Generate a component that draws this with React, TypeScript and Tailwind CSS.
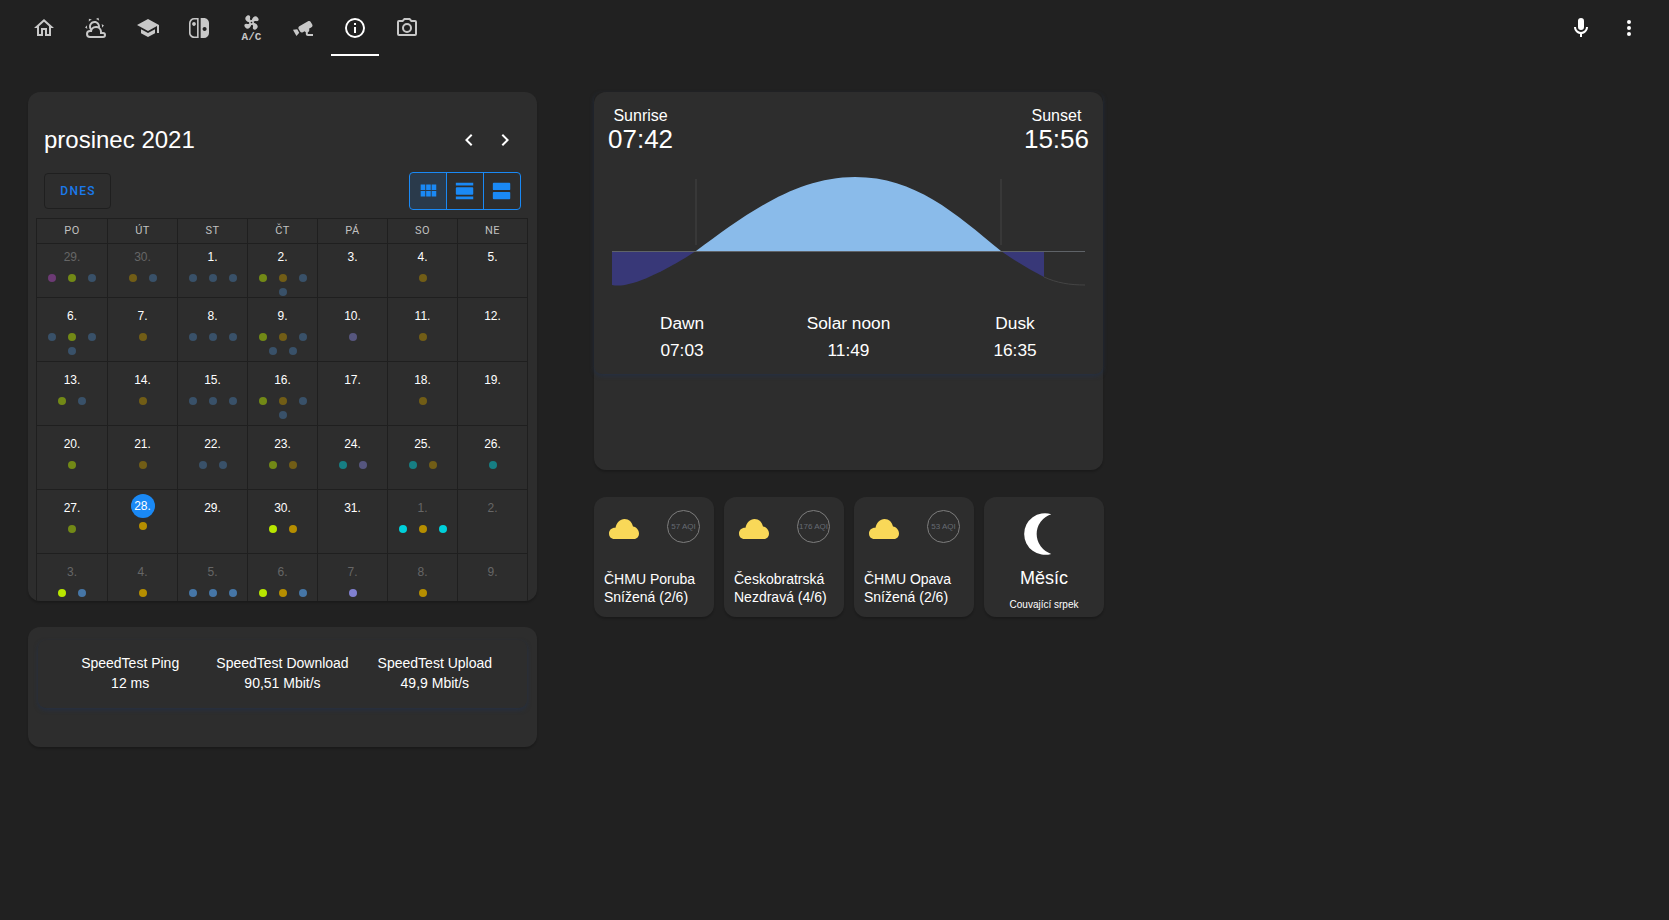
import { ReactNode } from "react";

const mdi = {
  home: "M12 5.69L17 10.19V18H15V12H9V18H7V10.19L12 5.69M12 3L2 12H5V20H11V14H13V20H19V12H22L12 3Z",
  weather:
    "M12.74,5.47C15.1,6.5 16.35,9.03 15.92,11.46C17.19,12.56 18,14.19 18,16V16.17C18.31,16.06 18.65,16 19,16A3,3 0 0,1 22,19A3,3 0 0,1 19,22H6A4,4 0 0,1 2,18A4,4 0 0,1 6,14H6.27C5,12.45 4.6,10.24 5.5,8.26C6.72,5.5 9.97,4.24 12.74,5.47M11.93,7.3C10.16,6.5 8.09,7.31 7.31,9.07C6.85,10.09 6.93,11.22 7.41,12.13C8.5,10.83 10.16,10 12,10C12.7,10 13.38,10.12 14,10.34C13.94,9.06 13.18,7.86 11.93,7.3M13.55,3.64C13,3.4 12.45,3.23 11.88,3.12L14.37,1.82L15.27,4.71C14.76,4.29 14.19,3.93 13.55,3.64M6.09,4.44C5.6,4.79 5.17,5.19 4.8,5.63L4.91,2.82L7.87,3.5C7.25,3.71 6.65,4.03 6.09,4.44M18,9.71C17.91,9.12 17.78,8.55 17.59,8L19.97,9.5L17.92,11.73C18.03,11.08 18.05,10.4 18,9.71M3.04,11.3C3.11,11.9 3.24,12.47 3.43,13L1.06,11.5L3.1,9.28C3,9.93 2.97,10.61 3.04,11.3M19,18H16V16A4,4 0 0,0 12,12A4,4 0 0,0 8,16H6A2,2 0 0,0 4,18A2,2 0 0,0 6,20H19A1,1 0 0,0 20,19A1,1 0 0,0 19,18Z",
  school: "M12,3L1,9L12,15L21,10.09V17H23V9M5,13.18V17.18L12,21L19,17.18V13.18L12,17L5,13.18Z",
  swit: "M10.04,20.4H7.12C6.19,20.4 5.3,20 4.64,19.36C4,18.7 3.6,17.81 3.6,16.88V7.12C3.6,6.19 4,5.3 4.64,4.64C5.3,4 6.19,3.62 7.12,3.62H10.04V20.4M7.12,2A5.12,5.12 0 0,0 2,7.12V16.88C2,19.71 4.29,22 7.12,22H11.65V2H7.12M5.11,8C5.11,9.04 5.95,9.88 7,9.88C8.03,9.88 8.87,9.04 8.87,8C8.87,6.96 8.03,6.12 7,6.12C5.95,6.12 5.11,6.96 5.11,8M17.61,11C18.72,11 19.62,11.89 19.62,13C19.62,14.12 18.72,15 17.61,15C16.5,15 15.58,14.12 15.58,13C15.58,11.89 16.5,11 17.61,11M16.88,22A5.12,5.12 0 0,0 22,16.88V7.12C22,4.29 19.71,2 16.88,2H13.65V22H16.88Z",
  fan: "M12,11A1,1 0 0,0 11,12A1,1 0 0,0 12,13A1,1 0 0,0 13,12A1,1 0 0,0 12,11M12.5,2C17,2 17.11,5.57 14.75,6.75C13.76,7.24 13.32,8.29 13.13,9.22C13.61,9.42 14.03,9.73 14.35,10.13C18.05,8.13 22.03,8.92 22.03,12.5C22.03,17 18.46,17.1 17.28,14.73C16.78,13.74 15.72,13.3 14.79,13.11C14.59,13.59 14.28,14 13.88,14.34C15.87,18.03 15.08,22 11.5,22C7,22 6.91,18.42 9.27,17.24C10.25,16.75 10.69,15.71 10.89,14.79C10.4,14.59 9.97,14.27 9.65,13.87C5.96,15.85 2,15.07 2,11.5C2,7 5.56,6.89 6.74,9.26C7.24,10.25 8.29,10.68 9.22,10.87C9.41,10.39 9.73,9.97 10.14,9.65C8.15,5.96 8.94,2 12.5,2Z",
  cctv: "M18.15,4.94C17.77,4.91 17.37,5 17,5.2L8.35,10.2C7.39,10.76 7.07,12 7.62,12.94L9.12,15.53C9.67,16.5 10.89,16.82 11.85,16.27L13.65,15.23C13.92,15.69 14.32,16.06 14.81,16.27V18.04C14.81,19.13 15.7,20 16.81,20H22V18.04H16.81V16.27C17.72,15.87 18.31,14.97 18.31,14C18.31,13.54 18.19,13.11 17.97,12.73L20.5,11.27C21.47,10.71 21.8,9.5 21.24,8.53L19.74,5.94C19.4,5.34 18.79,5 18.15,4.94M6.22,13.17L2,13.87L2.75,15.17L4.75,18.63L5.5,19.93L8.22,16.63L6.22,13.17Z",
  info: "M11,9H13V7H11M12,20C7.59,20 4,16.41 4,12C4,7.59 7.59,4 12,4C16.41,4 20,7.59 20,12C20,16.41 16.41,20 12,20M12,2A10,10 0 0,0 2,12A10,10 0 0,0 12,22A10,10 0 0,0 22,12A10,10 0 0,0 12,2M11,17H13V11H11V17Z",
  camera:
    "M20,4H16.83L15,2H9L7.17,4H4A2,2 0 0,0 2,6V18A2,2 0 0,0 4,20H20A2,2 0 0,0 22,18V6A2,2 0 0,0 20,4M20,18H4V6H8.05L9.88,4H14.12L15.95,6H20V18M12,7A5,5 0 0,0 7,12A5,5 0 0,0 12,17A5,5 0 0,0 17,12A5,5 0 0,0 12,7M12,15A3,3 0 0,1 9,12A3,3 0 0,1 12,9A3,3 0 0,1 15,12A3,3 0 0,1 12,15Z",
  mic: "M12,2A3,3 0 0,1 15,5V11A3,3 0 0,1 12,14A3,3 0 0,1 9,11V5A3,3 0 0,1 12,2M19,11C19,14.53 16.39,17.44 13,17.93V21H11V17.93C7.61,17.44 5,14.53 5,11H7A5,5 0 0,0 12,16A5,5 0 0,0 17,11H19Z",
  dots: "M12,16A2,2 0 0,1 14,18A2,2 0 0,1 12,20A2,2 0 0,1 10,18A2,2 0 0,1 12,16M12,10A2,2 0 0,1 14,12A2,2 0 0,1 12,14A2,2 0 0,1 10,12A2,2 0 0,1 12,10M12,4A2,2 0 0,1 14,6A2,2 0 0,1 12,8A2,2 0 0,1 10,6A2,2 0 0,1 12,4Z",
  moon: "M2 12A10 10 0 0 0 15 21.54A10 10 0 0 1 15 2.46A10 10 0 0 0 2 12Z",
  left: "M15.41,16.58L10.83,12L15.41,7.41L14,6L8,12L14,18L15.41,16.58Z",
  right: "M8.59,16.58L13.17,12L8.59,7.41L10,6L16,12L10,18L8.59,16.58Z",
  module: "M16,5V11H21V5M10,11H15V5H10M16,18H21V12H16M10,18H15V12H10M4,18H9V12H4M4,11H9V5H4V11Z",
  day: "M2,3V6H21V3M20,8H3A1,1 0 0,0 2,9V15A1,1 0 0,0 3,16H20A1,1 0 0,0 21,15V9A1,1 0 0,0 20,8M2,21H21V18H2V21Z",
  agenda:
    "M20,3H3A1,1 0 0,0 2,4V10A1,1 0 0,0 3,11H20A1,1 0 0,0 21,10V4A1,1 0 0,0 20,3M20,13H3A1,1 0 0,0 2,14V20A1,1 0 0,0 3,21H20A1,1 0 0,0 21,20V14A1,1 0 0,0 20,13Z",
};

const Icon = ({ d, className }: { d: string; className?: string }) => (
  <svg viewBox="0 0 24 24" className={className} fill="currentColor">
    <path d={d} />
  </svg>
);

const AcIcon = () => (
  <svg viewBox="0 0 24 24" className="w-6 h-6 overflow-visible text-[#c8c8c8]" fill="currentColor">
    <g transform="translate(2.9 -3.1) scale(0.8) rotate(45 12 12)">
      <path d={mdi.fan} />
    </g>
    <text x="12.5" y="24" textAnchor="middle" fontFamily="Liberation Mono" fontWeight="700" fontSize="11">
      A/C
    </text>
  </svg>
);

const Tab = ({ active, children }: { active?: boolean; children: ReactNode }) => (
  <div className={"relative w-12 h-14 flex items-center justify-center " + (active ? "text-white" : "text-[#c8c8c8]")}>
    {children}
    {active && <div className="absolute left-0 right-0 bottom-0 h-[2px] bg-white" />}
  </div>
);

// bright colours, days in the past get opacity-50
const dotColors: Record<string, string> = {
  p: "bg-[#ab47bc]",
  l: "bg-[#b8e600]",
  b: "bg-[#4676a6]",
  g: "bg-[#b58e00]",
  t: "bg-[#00d0da]",
  i: "bg-[#8080d0]",
};

interface Day {
  n: number;
  dots?: string;
  muted?: boolean;
  dim?: boolean;
  today?: boolean;
}

const d = (n: number, dots = "", muted = false, dim = true): Day => ({ n, dots, muted, dim });

const weeks: Day[][] = [
  [d(29, "plb", true), d(30, "gb", true), d(1, "bbb"), d(2, "lgbb"), d(3), d(4, "g"), d(5)],
  [d(6, "blbb"), d(7, "g"), d(8, "bbb"), d(9, "lgbbb"), d(10, "i"), d(11, "g"), d(12)],
  [d(13, "lb"), d(14, "g"), d(15, "bbb"), d(16, "lgbb"), d(17), d(18, "g"), d(19)],
  [d(20, "l"), d(21, "g"), d(22, "bb"), d(23, "lg"), d(24, "ti"), d(25, "tg"), d(26, "t")],
  [
    d(27, "l"),
    { n: 28, dots: "g", today: true },
    d(29),
    d(30, "lg", false, false),
    d(31),
    d(1, "tgt", true, false),
    d(2, "", true, false),
  ],
  [
    d(3, "lb", true, false),
    d(4, "g", true, false),
    d(5, "bbb", true, false),
    d(6, "lgb", true, false),
    d(7, "i", true, false),
    d(8, "g", true, false),
    d(9, "", true, false),
  ],
];

const DayCell = ({ day, first }: { day: Day; first: boolean }) => (
  <div className={"border-r border-b border-[#1f1f1f] flex flex-col items-center " + (first ? "h-[54px] pt-[4px]" : day.today ? "h-[64px] pt-[4px]" : "h-[64px] pt-[9px]")}>
    {day.today ? (
      <div className="w-6 h-6 rounded-full bg-[#1a89f5] flex items-center justify-center text-[12px] text-white">{day.n}.</div>
    ) : (
      <div className={"text-[12px] leading-[18px] " + (day.muted ? "text-[#666666]" : "text-white")}>{day.n}.</div>
    )}
    <div className={"flex flex-wrap justify-center w-full " + (day.today ? "mt-[1px]" : "mt-[5px]")}>
      {(day.dots ?? "").split("").filter(Boolean).map((c, i) => (
        <span key={i} className={"w-2 h-2 mx-[6px] my-[3px] rounded-full " + dotColors[c] + (day.dim ? " opacity-50" : "")} />
      ))}
    </div>
  </div>
);

const Calendar = () => (
  <div className="h-[509px] rounded-[12px] bg-[#2d2d2d] shadow-[0_2px_2px_rgba(0,0,0,0.2)] overflow-hidden pt-[32px] px-[8px]">
    <div className="flex items-center justify-between pl-[8px] pr-[6px] h-[32px]">
      <div className="text-[24px] leading-8 text-white">prosinec 2021</div>
      <div className="flex text-white">
        <Icon d={mdi.left} className="w-[36px] h-6" />
        <Icon d={mdi.right} className="w-[36px] h-6" />
      </div>
    </div>
    <div className="flex items-center justify-between mx-[8px] mt-[16px] h-[38px]">
      <div className="w-[67px] h-[36px] pl-[1px] rounded border border-[#1f1f1f] flex items-center justify-center font-['Roboto'] font-medium text-[12px] tracking-[1.25px] text-[#1a7aeb]">
        DNES
      </div>
      <div className="flex h-[38px] rounded border border-[#1a89f5] text-[#1a89f5]">
        <div className="w-[37px] flex items-center justify-center bg-[#1a89f5]/15 border-r border-[#1a89f5]">
          <Icon d={mdi.module} className="w-[22px] h-[22px]" />
        </div>
        <div className="w-[37px] flex items-center justify-center border-r border-[#1a89f5]">
          <Icon d={mdi.day} className="w-[22px] h-[22px]" />
        </div>
        <div className="w-[36px] flex items-center justify-center">
          <Icon d={mdi.agenda} className="w-[22px] h-[22px]" />
        </div>
      </div>
    </div>
    <div className="mt-[8px] w-[492px] border-t border-l border-[#1f1f1f]">
      <div className="grid grid-cols-[71px_repeat(6,70px)] h-[25px]">
        {["PO", "ÚT", "ST", "ČT", "PÁ", "SO", "NE"].map((h) => (
          <div key={h} className="border-r border-b border-[#1f1f1f] flex items-center justify-center font-['Roboto'] text-[11px] tracking-[0.5px] text-[#c0c0c0]">
            {h}
          </div>
        ))}
      </div>
      {weeks.map((week, i) => (
        <div key={i} className="grid grid-cols-[71px_repeat(6,70px)]">
          {week.map((day, j) => (
            <DayCell key={j} day={day} first={i === 0} />
          ))}
        </div>
      ))}
    </div>
  </div>
);

const SpeedTest = () => (
  <div className="h-[120px] rounded-[12px] bg-[#2d2d2d] shadow-[0_2px_2px_rgba(0,0,0,0.2)] pt-[13px] px-[10px]">
    <div className="grid grid-cols-3 px-[16px] pt-[13px] pb-[15px] rounded-lg shadow-[0_2px_4px_rgba(35,48,70,0.8)] text-[14px] leading-5 text-white text-center">
      <div>
        <div>SpeedTest Ping</div>
        <div>12 ms</div>
      </div>
      <div>
        <div>SpeedTest Download</div>
        <div>90,51 Mbit/s</div>
      </div>
      <div>
        <div>SpeedTest Upload</div>
        <div>49,9 Mbit/s</div>
      </div>
    </div>
  </div>
);

const SunChart = () => (
  <svg viewBox="612 170 473 125" className="block w-[473px] h-[125px] ml-[18px] mt-[18px]">
    <line x1="696" y1="179" x2="696" y2="245" stroke="#444444" />
    <line x1="1001" y1="179" x2="1001" y2="245" stroke="#444444" />
    <path d="M696,251 C745,215 795,177 855,177 C915,177 955,213 1001,251 Z" fill="#8abbea" />
    <path d="M612,285 C630,289 665,271 696,251 L612,251 Z" fill="#383878" />
    <path d="M1001,251 C1015,261 1030,270 1044,277 L1044,251 Z" fill="#383878" />
    <path d="M1044,277 C1057,283 1070,285 1085,285" fill="none" stroke="#444444" />
    <line x1="612" y1="251.5" x2="1085" y2="251.5" stroke="#5f6368" />
  </svg>
);

const SunCard = () => (
  <div className="w-[509px] h-[378px] rounded-[12px] bg-[#2d2d2d] shadow-[0_2px_2px_rgba(0,0,0,0.2)] text-white">
    <div className="h-[282px] rounded-lg shadow-[0_2px_4px_rgba(35,48,70,0.8)]">
      <div className="flex justify-between px-[14px] pt-[14px]">
        <div className="text-center">
          <div className="text-[16px] leading-[20px]">Sunrise</div>
          <div className="text-[26px] leading-[26px]">07:42</div>
        </div>
        <div className="text-center">
          <div className="text-[16px] leading-[20px]">Sunset</div>
          <div className="text-[26px] leading-[26px]">15:56</div>
        </div>
      </div>
      <SunChart />
      <div className="mt-[15px] text-[17.3px] leading-[27px] text-center flex pl-[48px] pr-[48px] justify-between">
        <div className="w-[80px]">
          <div>Dawn</div>
          <div>07:03</div>
        </div>
        <div className="w-[100px]">
          <div>Solar noon</div>
          <div>11:49</div>
        </div>
        <div className="w-[80px]">
          <div>Dusk</div>
          <div>16:35</div>
        </div>
      </div>
    </div>
  </div>
);

const Cloud = () => (
  <svg viewBox="0 0 30 20" className="w-[30px] h-5 mt-[9px] ml-[5px] text-[#f9d858]" fill="currentColor">
    <path d="M5.5,20 C2,20 0,17.5 0,14.5 C0,11 3,8.5 6.5,8.8 C7.5,3.5 11,0 15.5,0 C20,0 23,3 24,7.5 C27.5,8 30,11 30,14.5 C30,17.5 28,20 25,20 Z" />
  </svg>
);

const AirCard = ({ aqi, name, state }: { aqi: string; name: string; state: string }) => (
  <div className="w-[120px] h-[120px] rounded-[12px] bg-[#2d2d2d] shadow-[0_2px_2px_rgba(0,0,0,0.2)] px-[10px] pt-[13px] text-white">
    <div className="flex justify-between items-start h-[61px]">
      <Cloud />
      <div className="w-[33px] h-[33px] mr-[4px] rounded-full border-[1.5px] border-[#7d7d7d] flex items-center justify-center text-[8px] text-[#666b73] whitespace-nowrap">
        {aqi}
      </div>
    </div>
    <div className="text-[14px] leading-[17.5px] whitespace-nowrap">{name}</div>
    <div className="text-[14px] leading-[17.5px] whitespace-nowrap">{state}</div>
  </div>
);

const MoonCard = () => (
  <div className="w-[120px] h-[120px] rounded-[12px] bg-[#2d2d2d] shadow-[0_2px_2px_rgba(0,0,0,0.2)] flex flex-col items-center pt-[12px] text-white">
    <Icon d={mdi.moon} className="w-[50px] h-[50px] ml-[2px]" />
    <div className="text-[18px] leading-[22px] mt-[8px]">Měsíc</div>
    <div className="text-[10px] leading-[12px] mt-[10px]">Couvající srpek</div>
  </div>
);

export default function App() {
  return (
    <div className="min-h-screen bg-[#212121] font-['Liberation_Sans',sans-serif]">
      <div className="flex justify-between h-14 pl-5 pr-4">
        <div className="flex gap-[3.8px]">
          <Tab><Icon d={mdi.home} className="w-6 h-6" /></Tab>
          <Tab><Icon d={mdi.weather} className="w-6 h-6" /></Tab>
          <Tab><Icon d={mdi.school} className="w-6 h-6" /></Tab>
          <Tab><Icon d={mdi.swit} className="w-6 h-6" /></Tab>
          <Tab><AcIcon /></Tab>
          <Tab><Icon d={mdi.cctv} className="w-6 h-6" /></Tab>
          <Tab active><Icon d={mdi.info} className="w-6 h-6" /></Tab>
          <Tab><Icon d={mdi.camera} className="w-6 h-6" /></Tab>
        </div>
        <div className="flex text-white">
          <div className="w-12 h-14 flex items-center justify-center"><Icon d={mdi.mic} className="w-6 h-6" /></div>
          <div className="w-12 h-14 flex items-center justify-center"><Icon d={mdi.dots} className="w-6 h-6" /></div>
        </div>
      </div>
      <div className="flex gap-[57px] pl-[28px] pt-[36px]">
        <div className="w-[509px] flex flex-col gap-[26px]">
          <Calendar />
          <SpeedTest />
        </div>
        <div className="w-[510px] flex flex-col gap-[27px]">
          <SunCard />
          <div className="flex gap-[10px]">
            <AirCard aqi="57 AQI" name="ČHMU Poruba" state="Snížená (2/6)" />
            <AirCard aqi="176 AQI" name="Českobratrská" state="Nezdravá (4/6)" />
            <AirCard aqi="53 AQI" name="ČHMU Opava" state="Snížená (2/6)" />
            <MoonCard />
          </div>
        </div>
      </div>
    </div>
  );
}
